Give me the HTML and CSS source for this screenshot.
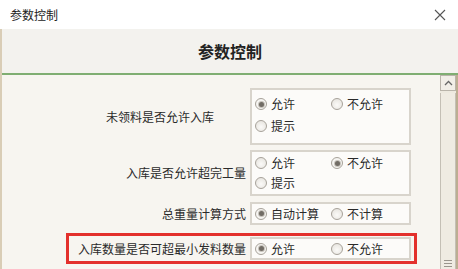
FILE: index.html
```html
<!DOCTYPE html>
<html>
<head>
	<meta charset="UTF-8">
	<title>参数控制</title>
	<link rel="stylesheet" href="styles.css">
</head>
<body>
	<div class="titlebar">
		<span class="title">参数控制</span>
		<svg class="close" width="12" height="12" viewBox="0 0 12 12">
			<path d="M1 1 L11 11 M11 1 L1 11" stroke="#555" stroke-width="1.1" fill="none"/>
		</svg>
	</div>
	<div class="dialog">
		<div class="head">参数控制</div>
		<div class="main">
			<div class="form">
				<div class="row row-first">
					<div class="label label-pad">未领料是否允许入库</div>
					<div class="box box-a">
						<label class="opt"><span class="radio on"></span>允许</label>
						<label class="opt"><span class="radio"></span>不允许</label>
						<label class="opt"><span class="radio"></span>提示</label>
					</div>
				</div>
				<div class="row row-second">
					<div class="label">入库是否允许超完工量</div>
					<div class="box box-b">
						<label class="opt"><span class="radio"></span>允许</label>
						<label class="opt"><span class="radio on"></span>不允许</label>
						<label class="opt"><span class="radio"></span>提示</label>
					</div>
				</div>
				<div class="row row-third">
					<div class="label">总重量计算方式</div>
					<div class="box box-c">
						<label class="opt"><span class="radio on"></span>自动计算</label>
						<label class="opt"><span class="radio"></span>不计算</label>
					</div>
				</div>
				<div class="row row-mark">
					<div class="label">入库数量是否可超最小发料数量</div>
					<div class="box box-c">
						<label class="opt"><span class="radio on"></span>允许</label>
						<label class="opt"><span class="radio"></span>不允许</label>
					</div>
				</div>
			</div>
			<div class="scroll">
				<div class="scroll-btn">
					<svg width="9" height="6" viewBox="0 0 9 6">
						<path d="M1 5 L4.5 1.5 L8 5" stroke="#666" stroke-width="1.3" fill="none"/>
					</svg>
				</div>
				<div class="scroll-thumb">
					<span class="grip"></span>
				</div>
			</div>
		</div>
	</div>
</body>
</html>
```

FILE: styles.css
```css
html, body {
	margin: 0;
	padding: 0;
}
body {
	width: 458px;
	height: 269px;
	overflow: hidden;
	background: #fff;
	font: 12px/1 "Noto Sans CJK SC", "Liberation Sans", sans-serif;
	color: #2a2a2a;
}
.titlebar {
	display: flex;
	align-items: center;
	justify-content: space-between;
	height: 29px;
	padding: 0 12px 0 10px;
	background: #fff;
}
.title {
	font-size: 12px;
	color: #222;
}
.close {
	display: block;
}
.dialog {
	border-left: 2px solid #d9cdb6;
	background: #f7f5f0;
}
.head {
	height: 44px;
	line-height: 44px;
	text-align: center;
	font-size: 16px;
	font-weight: bold;
	color: #222;
	background: #f3f2ee;
	border-bottom: 2px solid #7fae72;
}
.main {
	display: flex;
	height: 194px;
}
.form {
	flex: 1;
	padding: 13px 0 0 67px;
}
.row {
	display: flex;
	align-items: center;
}
.row-second {
	margin-top: 5px;
}
.row-third {
	margin-top: 6px;
}
.row-mark {
	margin: 8px 0 0 -3px;
	padding: 1px 3px 1px 0;
	width: 342px;
	border: 3px solid #e3302c;
}
.label {
	width: 181px;
	padding-right: 4px;
	box-sizing: border-box;
	text-align: right;
	white-space: nowrap;
	color: #2a2a2a;
}
.label-pad {
	padding-right: 36px;
}
.box {
	box-sizing: border-box;
	width: 161px;
	display: grid;
	grid-template-columns: 76px auto;
	align-content: start;
	padding-left: 3px;
	background: #fcfbf9;
	border: 2px solid #d8d4cc;
}
.box-a {
	height: 57px;
	padding-top: 3px;
	grid-auto-rows: 22px;
}
.box-b {
	height: 46px;
	padding-top: 1px;
	grid-auto-rows: 20px;
}
.box-c {
	height: 23px;
	grid-auto-rows: 19px;
}
.opt {
	display: flex;
	align-items: center;
	gap: 4px;
	white-space: nowrap;
	color: #2a2a2a;
}
.radio {
	box-sizing: border-box;
	width: 12px;
	height: 12px;
	border-radius: 50%;
	border: 1px solid #a7a29a;
	background: radial-gradient(circle at 50% 60%, #fbfaf8 0, #e3e0da 100%);
	position: relative;
}
.radio.on {
	background: #f6f5f2;
}
.radio.on::after {
	content: "";
	position: absolute;
	left: 2.5px;
	top: 2.5px;
	width: 5px;
	height: 5px;
	border-radius: 50%;
	background: #716c65;
	box-shadow: 0 0 0 1px #c6c2bb;
}
.scroll {
	width: 16px;
	display: flex;
	flex-direction: column;
	background: #ede9df;
	border-right: 2px solid #bcae92;
}
.scroll-btn {
	box-sizing: border-box;
	height: 16px;
	display: flex;
	align-items: center;
	justify-content: center;
	border: 1px solid #b9b4aa;
	background: #f1eee7;
}
.scroll-thumb {
	flex: 1;
	margin-top: 2px;
	display: flex;
	align-items: flex-end;
	justify-content: center;
	padding-bottom: 2px;
	border-left: 1px solid #c4bfb5;
	border-right: 1px solid #c4bfb5;
	background: #efebe2;
}
.grip {
	width: 8px;
	height: 5px;
	border-top: 1px solid #9a958c;
	border-bottom: 1px solid #9a958c;
	background: linear-gradient(#f0ece4 0 2px, #9a958c 2px 3px, #f0ece4 3px);
}
```
